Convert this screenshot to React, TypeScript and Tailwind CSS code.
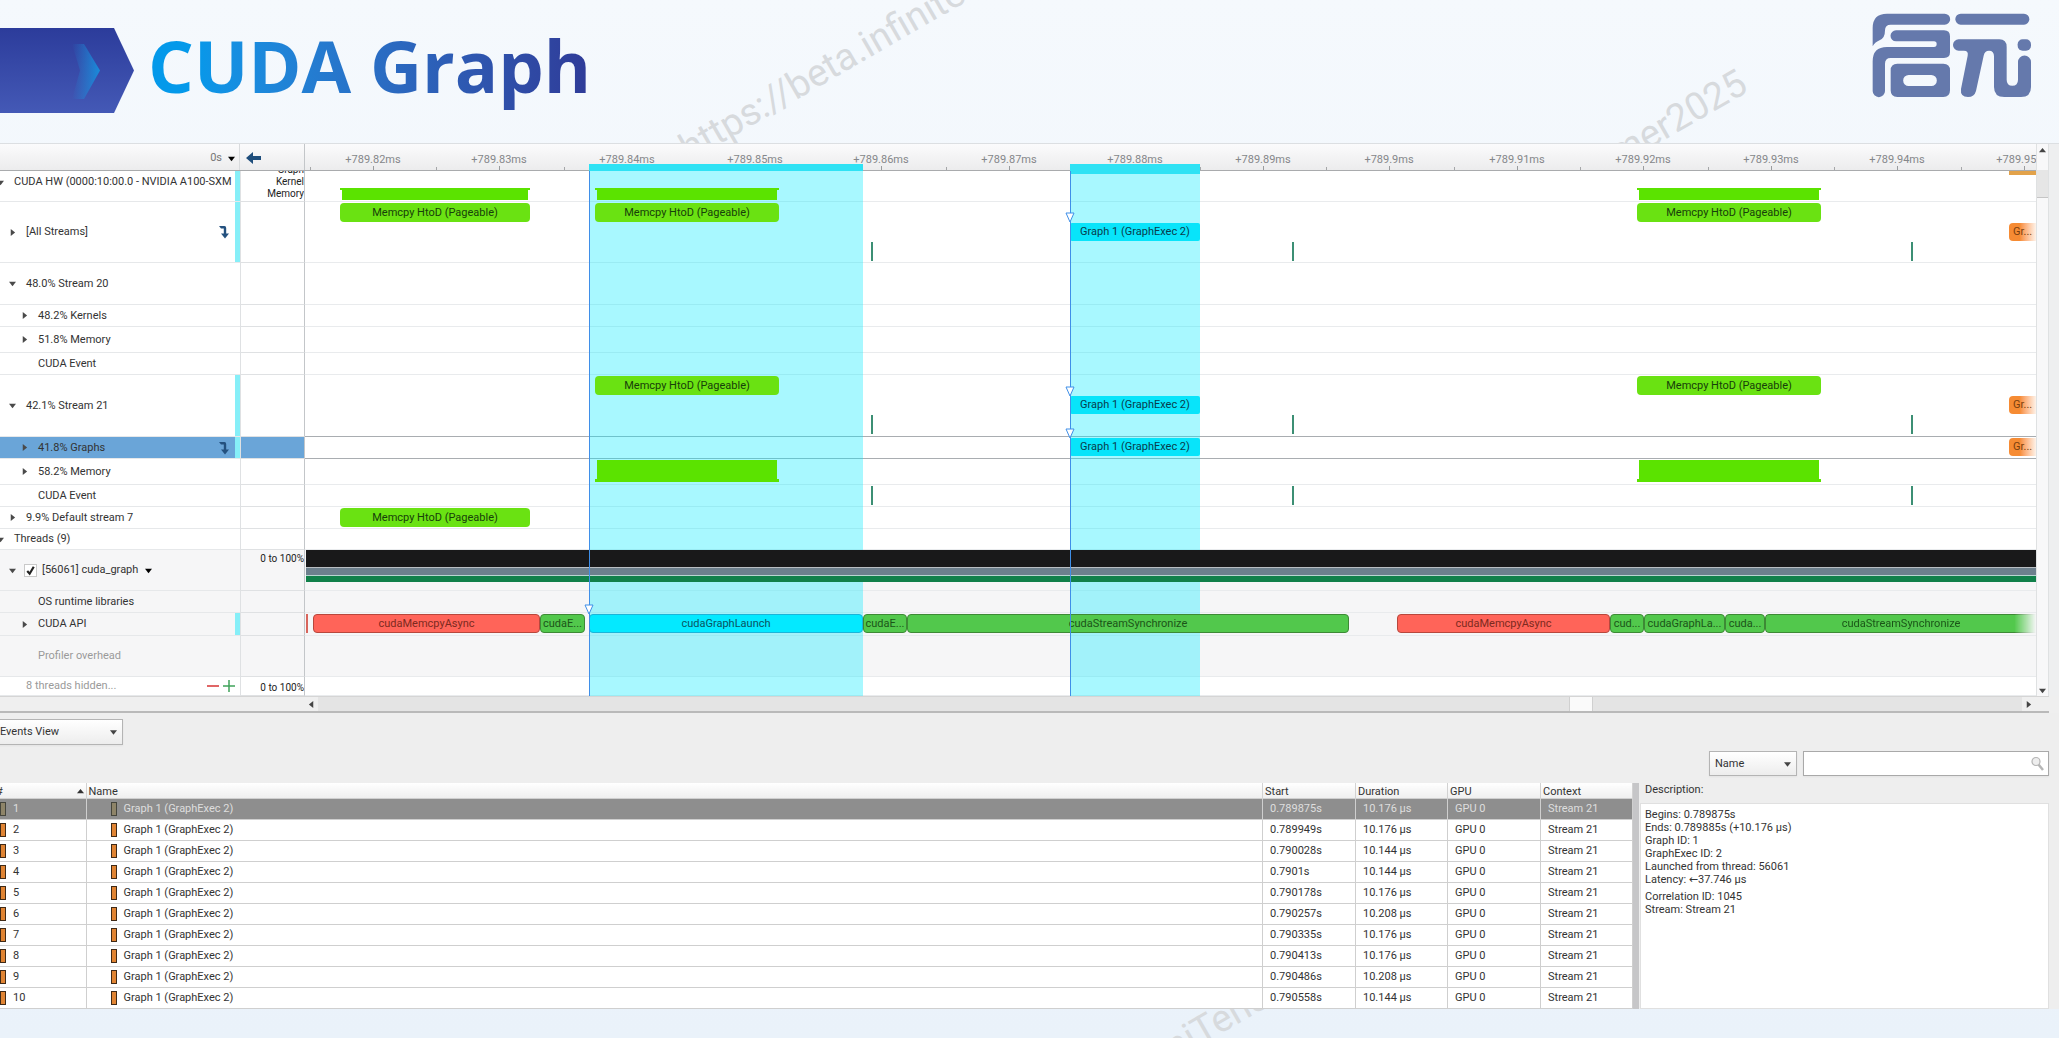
import React from 'react';

const ORIGIN = 305;
const SPAN = 1731;
const at = (x: number) => `${((x - ORIGIN) / SPAN) * 100}%`;
const wide = (w: number) => `${(w / SPAN) * 100}%`;

type Block = {
  kind: 'copy' | 'graph' | 'next' | 'red' | 'green' | 'launch' | 'event' | 'trackTop' | 'trackBottom' | 'sliver' | 'strip' | 'greenFade';
  from: number;
  to: number;
  top: string;
  label?: string;
};

type Row = {
  label: string;
  level: number;
  height: string;
  caret?: 'open' | 'closed';
  tone?: 'gray' | 'selected';
  muted?: boolean;
  raised?: boolean;
  jump?: boolean;
  linked?: boolean;
  check?: boolean;
  plusMinus?: boolean;
  values?: string[];
  valuesTop?: boolean;
  usage?: boolean;
  blocks?: Block[];
};

const MEMCPY = 'Memcpy HtoD (Pageable)';
const GRAPH = 'Graph 1 (GraphExec 2)';

const streamEvents = (top: string): Block[] =>
  [871, 1292, 1911].map((x) => ({ kind: 'event' as const, from: x, to: x + 2, top }));

const rows: Row[] = [
  {
    label: 'CUDA HW (0000:10:00.0 - NVIDIA A100-SXM', level: 0, height: 'h-[31px]', caret: 'open', linked: true, raised: true,
    values: ['Graph', 'Kernel', 'Memory'],
    blocks: [
      { kind: 'trackTop', from: 340, to: 530, top: 'top-[17px]' },
      { kind: 'trackTop', from: 595, to: 779, top: 'top-[17px]' },
      { kind: 'trackTop', from: 1637, to: 1821, top: 'top-[17px]' },
      { kind: 'strip', from: 2009, to: 2036, top: 'top-0' },
    ],
  },
  {
    label: '[All Streams]', level: 1, height: 'h-[61px]', caret: 'closed', linked: true, jump: true,
    blocks: [
      { kind: 'copy', from: 340, to: 530, top: 'top-px', label: MEMCPY },
      { kind: 'copy', from: 595, to: 779, top: 'top-px', label: MEMCPY },
      { kind: 'copy', from: 1637, to: 1821, top: 'top-px', label: MEMCPY },
      { kind: 'graph', from: 1070, to: 1200, top: 'top-[21px]', label: GRAPH },
      { kind: 'next', from: 2009, to: 2036, top: 'top-[21px]', label: 'Gr...' },
      ...streamEvents('top-10'),
    ],
  },
  { label: '48.0% Stream 20', level: 1, height: 'h-[42px]', caret: 'open' },
  { label: '48.2% Kernels', level: 2, height: 'h-[22px]', caret: 'closed' },
  { label: '51.8% Memory', level: 2, height: 'h-[26px]', caret: 'closed' },
  { label: 'CUDA Event', level: 2, height: 'h-[22px]' },
  {
    label: '42.1% Stream 21', level: 1, height: 'h-[62px]', caret: 'open', linked: true,
    blocks: [
      { kind: 'copy', from: 595, to: 779, top: 'top-px', label: MEMCPY },
      { kind: 'copy', from: 1637, to: 1821, top: 'top-px', label: MEMCPY },
      { kind: 'graph', from: 1070, to: 1200, top: 'top-[21px]', label: GRAPH },
      { kind: 'next', from: 2009, to: 2036, top: 'top-[21px]', label: 'Gr...' },
      ...streamEvents('top-10'),
    ],
  },
  {
    label: '41.8% Graphs', level: 2, height: 'h-[22px]', caret: 'closed', tone: 'selected', linked: true, jump: true,
    blocks: [
      { kind: 'graph', from: 1070, to: 1200, top: 'top-px', label: GRAPH },
      { kind: 'next', from: 2009, to: 2036, top: 'top-px', label: 'Gr...' },
    ],
  },
  {
    label: '58.2% Memory', level: 2, height: 'h-[26px]', caret: 'closed',
    blocks: [
      { kind: 'trackBottom', from: 595, to: 779, top: 'top-px' },
      { kind: 'trackBottom', from: 1637, to: 1821, top: 'top-px' },
    ],
  },
  { label: 'CUDA Event', level: 2, height: 'h-[22px]', blocks: streamEvents('top-px') },
  {
    label: '9.9% Default stream 7', level: 1, height: 'h-[22px]', caret: 'closed',
    blocks: [{ kind: 'copy', from: 340, to: 530, top: 'top-px', label: MEMCPY }],
  },
  { label: 'Threads (9)', level: 0, height: 'h-[21px]', caret: 'open' },
  {
    label: '[56061] cuda_graph', level: 1, height: 'h-[41px]', caret: 'open', tone: 'gray', check: true,
    values: ['0 to 100%'], valuesTop: true, usage: true,
  },
  { label: 'OS runtime libraries', level: 2, height: 'h-[22px]', tone: 'gray' },
  {
    label: 'CUDA API', level: 2, height: 'h-[23px]', caret: 'closed', tone: 'gray', linked: true,
    blocks: [
      { kind: 'sliver', from: 306, to: 308, top: 'top-px' },
      { kind: 'red', from: 313, to: 540, top: 'top-px', label: 'cudaMemcpyAsync' },
      { kind: 'green', from: 540, to: 585, top: 'top-px', label: 'cudaE...' },
      { kind: 'launch', from: 589, to: 863, top: 'top-px', label: 'cudaGraphLaunch' },
      { kind: 'green', from: 863, to: 907, top: 'top-px', label: 'cudaE...' },
      { kind: 'green', from: 907, to: 1349, top: 'top-px', label: 'cudaStreamSynchronize' },
      { kind: 'red', from: 1397, to: 1610, top: 'top-px', label: 'cudaMemcpyAsync' },
      { kind: 'green', from: 1610, to: 1644, top: 'top-px', label: 'cud...' },
      { kind: 'green', from: 1644, to: 1725, top: 'top-px', label: 'cudaGraphLa...' },
      { kind: 'green', from: 1725, to: 1765, top: 'top-px', label: 'cuda...' },
      { kind: 'greenFade', from: 1765, to: 2036, top: 'top-px', label: 'cudaStreamSynchronize' },
    ],
  },
  { label: 'Profiler overhead', level: 2, height: 'h-[41px]', tone: 'gray', muted: true },
  { label: '8 threads hidden...', level: 1, height: 'h-[19px]', muted: true, plusMinus: true, values: ['0 to 100%'] },
];

const blockStyle: Record<Block['kind'], string> = {
  copy: 'h-[19px] rounded bg-[#6ae212] text-[#17400a]',
  graph: 'h-[18px] rounded-xs bg-[#08e4fa] text-[#083c4c]',
  next: 'h-[18px] rounded-l bg-linear-to-r from-[#f68b33] from-40% to-[#fdf3ea] text-[#7a3f10] !justify-start pl-1',
  red: 'h-[19px] rounded border border-[#b8473c] bg-[#ff6459] text-[#7c2a20]',
  green: 'h-[19px] rounded border border-[#3d8a35] bg-[#52c84c] text-[#1b5518]',
  greenFade: 'h-[19px] rounded-l border border-r-0 border-[#3d8a35] bg-[#52c84c] text-[#1b5518] mask-r-from-92%',
  launch: 'h-[19px] rounded-sm border border-[#1cb4d8] bg-[#04e9ff] text-[#0a5362]',
  event: 'h-[19px] bg-[#3c8f74]',
  trackTop: '',
  trackBottom: '',
  sliver: 'h-[19px] bg-[#d8655c]',
  strip: 'h-1 bg-[#e2a24a]',
};

function TimelineBlock({ b }: { b: Block }) {
  const pos = { left: at(b.from), width: wide(b.to - b.from) };
  if (b.kind === 'trackTop' || b.kind === 'trackBottom') {
    return (
      <div className={`absolute z-20 flex flex-col ${b.top}`} style={pos}>
        {b.kind === 'trackTop' && <div className="h-0.5 bg-[#5be300]" />}
        <div className={`mx-0.5 bg-[#5be300] ${b.kind === 'trackTop' ? 'h-2.5' : 'h-[19px]'}`} />
        {b.kind === 'trackBottom' && <div className="h-[3px] bg-[#5be300]" />}
      </div>
    );
  }
  return (
    <div className={`absolute z-20 flex items-center justify-center overflow-hidden whitespace-nowrap ${b.top} ${blockStyle[b.kind]}`} style={pos}>
      {b.label}
    </div>
  );
}

function Triangle({ dir, className = '' }: { dir: 'down' | 'up' | 'left' | 'right'; className?: string }) {
  const d = { down: 'M0 2h8L4 7z', up: 'M0 6h8L4 1z', left: 'M6 0v8L1 4z', right: 'M2 0v8l5-4z' }[dir];
  return (
    <svg viewBox="0 0 8 8" className={`size-[7px] shrink-0 fill-current ${className}`} aria-hidden="true">
      <path d={d} />
    </svg>
  );
}

function JumpIcon() {
  return (
    <svg viewBox="0 0 10 14" className="h-3.5 w-2.5 shrink-0 fill-[#24517f]" aria-hidden="true">
      <path d="M0 1h5.5Q7.2 1 7.2 3v5.5H10L6 13.5 2 8.500h2.800V3.600H2z" />
    </svg>
  );
}

const indent = ['pl-[14px]', 'pl-[26px]', 'pl-[38px]'];
const toneBg = { gray: 'bg-[#f6f6f7]', selected: 'bg-[#6aa5d8]', none: 'bg-white' };

function TimelineRow({ r }: { r: Row }) {
  const bg = toneBg[r.tone ?? 'none'];
  const line = r.tone === 'selected' ? 'border-[#a9adb1]' : 'border-[#e9ebed]';
  return (
    <div className={`flex ${r.height}`}>
      <div className={`flex w-60 shrink-0 overflow-hidden border-b border-[#e6e8ea] ${bg} ${indent[r.level]} ${r.muted ? 'text-[#9a9a9a]' : 'text-[#333]'}`}>
        <div className={`flex min-w-0 flex-1 items-center ${r.raised ? 'pb-2' : ''}`}>
          {r.caret && (
            <button type="button" aria-label={`Toggle ${r.label}`} className="mr-[10px] -ml-[17px] text-[#4a4a4a]">
              <Triangle dir={r.caret === 'open' ? 'down' : 'right'} />
            </button>
          )}
          {r.check ? (
            <label className="flex items-center gap-[5px] whitespace-nowrap">
              <span className="relative -ml-0.5 flex size-[13px]">
                <input type="checkbox" defaultChecked className="peer size-[13px] appearance-none border border-[#c9c9c9] bg-white" />
                <svg viewBox="0 0 12 12" className="pointer-events-none absolute inset-0 hidden fill-none stroke-[#222] stroke-2 peer-checked:block" aria-hidden="true">
                  <path d="M3 6.500 5.200 9 9 2.500" />
                </svg>
              </span>
              {r.label}
              <Triangle dir="down" className="ml-0.5 text-black" />
            </label>
          ) : (
            <span className="whitespace-nowrap">{r.label}</span>
          )}
        </div>
        <span className="flex h-full shrink-0 items-center">
          {r.jump && <span className="mr-1.5"><JumpIcon /></span>}
          {r.plusMinus && (
            <span className="mr-[5px] flex items-center gap-1">
              <button type="button" aria-label="Hide thread" className="flex size-3 items-center"><span className="h-0.5 w-full bg-[#e06666]" /></button>
              <button type="button" aria-label="Show thread" className="flex size-3 items-center justify-center">
                <svg viewBox="0 0 12 12" className="size-3 stroke-[#3fa35a] stroke-[1.500]" aria-hidden="true"><path d="M0 6h12M6 0v12" /></svg>
              </button>
            </span>
          )}
          {r.linked && <span className="h-full w-[5px] shrink-0 bg-[#86eff8]" />}
        </span>
      </div>
      <div className={`flex w-[65px] shrink-0 flex-col items-end overflow-hidden border-x border-b border-[#dfe1e3] border-r-[#c3c6c9] text-[10px] leading-3 text-[#222] ${bg} ${r.valuesTop ? 'justify-start pt-[3px]' : 'justify-end pb-px'}`}>
        {r.values?.map((v) => <span key={v} className="whitespace-nowrap">{v}</span>)}
      </div>
      <div className={`relative min-w-0 flex-1 border-b ${line} ${r.tone === 'gray' ? 'bg-[#f6f6f7]' : 'bg-white'}`}>
        {r.tone === 'selected' && <div className="absolute inset-x-0 -top-px h-px bg-[#a9adb1]" />}
        {r.usage && (
          <div className="relative z-20 ml-px flex flex-col">
            <div className="h-[17px] bg-[#19191a]" />
            <div className="h-px bg-[#b9bec2]" />
            <div className="h-[7px] bg-[#6d808d]" />
            <div className="h-px bg-[#b9d5d0]" />
            <div className="h-1.5 bg-[#11804a]" />
          </div>
        )}
        {r.blocks?.map((b, i) => <TimelineBlock key={i} b={b} />)}
      </div>
    </div>
  );
}

const ticks: [string, number][] = [
  ['+789.82ms', 373], ['+789.83ms', 499], ['+789.84ms', 627], ['+789.85ms', 755], ['+789.86ms', 881], ['+789.87ms', 1009],
  ['+789.88ms', 1135], ['+789.89ms', 1263], ['+789.9ms', 1389], ['+789.91ms', 1517], ['+789.92ms', 1643], ['+789.93ms', 1771],
  ['+789.94ms', 1897], ['+789.95ms', 2024],
];

const selections = [
  { from: 589, to: 863, head: 'h-[7px]', flags: ['top-[460px]'] },
  { from: 1070, to: 1200, head: 'h-2.5', flags: ['top-[68px]', 'top-[242px]', 'top-[284px]'] },
];

function Selections() {
  return (
    <div className="pointer-events-none absolute inset-y-0 left-[305px] right-0">
      {selections.map((s) => (
        <React.Fragment key={s.from}>
          <div className="absolute top-[27px] bottom-0 z-10 bg-[#00eaff]/34" style={{ left: at(s.from), width: wide(s.to - s.from) }} />
          <div className={`absolute top-5 z-20 bg-[#2fe2f4] ${s.head}`} style={{ left: at(s.from), width: wide(s.to - s.from) }} />
          <div className="absolute top-[27px] bottom-0 z-30 w-px bg-[#3f8fe8]" style={{ left: at(s.from) }} />
          {s.flags.map((f) => (
            <svg key={f} viewBox="0 0 10 11" className={`absolute z-30 h-[11px] w-2.5 -translate-x-1/2 fill-white stroke-[#3f8fe8] ${f}`} style={{ left: at(s.from) }} aria-hidden="true">
              <path d="M1 1h8L5 10z" />
            </svg>
          ))}
        </React.Fragment>
      ))}
    </div>
  );
}

function Ruler() {
  return (
    <div className="flex h-[27px] border-b border-[#a9abad] bg-linear-to-b from-[#fbfbfc] to-[#ececed]">
      <button type="button" className="flex w-60 shrink-0 items-center justify-end gap-1.5 border-r border-[#d9dbdd] pt-0.5 pr-1 text-[#777]">
        0s <Triangle dir="down" className="text-black" />
      </button>
      <button type="button" aria-label="Back" className="flex w-[65px] shrink-0 items-center border-r border-[#c3c6c9] pt-0.5 pl-1.5">
        <svg viewBox="0 0 16 14" className="h-3.5 w-4 fill-[#1f4e7c]" aria-hidden="true">
          <path d="M7 1v4h8v4H7v4L0 7z" />
        </svg>
      </button>
      <div className="relative min-w-0 flex-1 overflow-hidden text-[#85878a]">
        {ticks.map(([t, x]) => (
          <React.Fragment key={t}>
            <span className="absolute top-2 -translate-x-1/2 whitespace-nowrap leading-4" style={{ left: at(x) }}>{t}</span>
            <span className="absolute bottom-0 h-1 w-px bg-[#9a9c9e]" style={{ left: at(x) }} />
            <span className="absolute bottom-0 h-[3px] w-px bg-[#a5a7a9]" style={{ left: at(x - 63) }} />
          </React.Fragment>
        ))}
      </div>
    </div>
  );
}

const events: [string, string][] = [
  ['0.789875s', '10.176 μs'], ['0.789949s', '10.176 μs'], ['0.790028s', '10.144 μs'], ['0.7901s', '10.144 μs'], ['0.790178s', '10.176 μs'],
  ['0.790257s', '10.208 μs'], ['0.790335s', '10.176 μs'], ['0.790413s', '10.176 μs'], ['0.790486s', '10.208 μs'], ['0.790558s', '10.144 μs'],
];

function Chip({ dim }: { dim: boolean }) {
  return <span className={`block h-3.5 w-1.5 shrink-0 border ${dim ? 'border-[#45453c] bg-[#8e8468]' : 'border-[#3f2a17] bg-[#e08433]'}`} />;
}

function EventsTable() {
  const th = 'border-r border-[#d2d2d2] px-0.5 pt-0.5 pb-0 text-left font-normal leading-[13px]';
  const td = 'border-r border-[#cfcfcf] py-0 pl-[7px]';
  return (
    <table className="w-full table-fixed border-collapse whitespace-nowrap">
      <colgroup>
        <col className="w-[86px]" />
        <col />
        <col className="w-[93px]" />
        <col className="w-[92px]" />
        <col className="w-[93px]" />
        <col className="w-[92px]" />
      </colgroup>
      <thead>
        <tr className="h-[15px] border-b border-[#cfcfcf] bg-linear-to-b from-white to-[#efefef] text-[#333]">
          <th className="overflow-hidden border-r border-[#d2d2d2] px-0 pt-0.5 pb-0 font-normal leading-[13px]">
            <span className="-ml-1 flex items-center justify-between pr-0.5"># <Triangle dir="up" /></span>
          </th>
          <th className={th}>Name</th>
          <th className={th}>Start</th>
          <th className={th}>Duration</th>
          <th className={th}>GPU</th>
          <th className={th}>Context</th>
        </tr>
      </thead>
      <tbody>
        {events.map(([start, dur], i) => (
          <tr key={start} className={`h-[21px] border-b border-[#cfcfcf] ${i === 0 ? 'bg-[#8e8e8e] text-[#dedede]' : 'bg-white text-[#333]'}`}>
            <td className="border-r border-[#cfcfcf] p-0">
              <span className="flex items-center gap-[7px]"><Chip dim={i === 0} />{i + 1}</span>
            </td>
            <td className="border-r border-[#cfcfcf] p-0 pl-6">
              <span className="flex items-center gap-[7px]"><Chip dim={i === 0} />{GRAPH}</span>
            </td>
            <td className={td}>{start}</td>
            <td className={td}>{dur}</td>
            <td className={td}>GPU 0</td>
            <td className={td}>Stream 21</td>
          </tr>
        ))}
      </tbody>
    </table>
  );
}

function Dropdown({ label, value, className }: { label: string; value: string; className: string }) {
  return (
    <div className={`relative ${className}`}>
      <select aria-label={label} className="size-full appearance-none border border-[#b4b4b4] bg-linear-to-b from-white to-[#ededed] pl-[5px] text-[#333] shadow-xs">
        <option>{value}</option>
      </select>
      <Triangle dir="down" className="pointer-events-none absolute right-1.5 top-1/2 -translate-y-1/2 text-[#444]" />
    </div>
  );
}

function Logo() {
  return (
    <svg viewBox="96 40 480 255" className="absolute right-[27px] top-[13px] h-[85px] w-40 fill-[#6579ac]" role="img" aria-label="启元">
      <path d="M98 140V85Q98 42 141 42H314a16.500 16.500 0 0 1 0 33H152Q135 75 135 92 135 115 120 121 105 127 98 140Z" />
      <path d="M168 92H312Q330 92 330 110V158Q330 175 312 175H152Q135 175 135 192V274a18.500 18.500 0 0 1-37 0V185Q98 142 141 142H282Q290 142 290 133 290 125 282 125H168a16.500 16.500 0 0 1 0-33Z" />
      <path fillRule="evenodd" d="M172 192H310q20 0 20 20V272q0 20-20 20H172q-20 0-20-20V212q0-20 20-20ZM206 226a16.500 16.500 0 0 0 0 33H274a16.500 16.500 0 0 0 0-33Z" />
      <rect x="346" y="42" width="222" height="33" rx="16" />
      <path d="M356 119H478Q500 119 500 142V240Q500 258 517 258 534 258 534 240V187a19.500 19.500 0 0 1 39 0V262Q573 292 543 292H493Q462 292 462 262V170Q462 153 447 153 434 153 431 168L408 274Q403 292 384 292 360 292 363 268L383 168Q386 153 372 153H356a17 17 0 0 1 0-34Z" />
      <rect x="533" y="119" width="40" height="34" rx="15" />
    </svg>
  );
}

export default function App() {
  return (
    <main className="flex min-h-screen flex-col overflow-hidden bg-linear-to-b from-[#f5f9fd] to-[#eaf2fa] font-['Roboto','DejaVu_Sans',sans-serif] text-[11px] leading-4">
      <header className="relative h-[143px] overflow-hidden">
        <span className="absolute left-[692px] top-[129px] origin-bottom-left -rotate-30 whitespace-nowrap text-[38px] leading-none text-[#d7dadd]">https://beta.infinitensor</span>
        <span className="absolute right-[306px] top-[58px] origin-bottom-right -rotate-30 whitespace-nowrap text-[38px] leading-none text-[#d7dadd]">summer2025</span>
        <div className="flex items-start pt-7">
          <svg viewBox="0 0 134 86" className="h-[86px] w-[134px]" aria-hidden="true">
            <defs>
              <linearGradient id="tab" x1="0" y1="0" x2="0" y2="1">
                <stop offset="0" stopColor="#2c3c9b" />
                <stop offset="1" stopColor="#4459b6" />
              </linearGradient>
              <linearGradient id="chev" x1="0" y1="0" x2="1" y2="0">
                <stop offset="0" stopColor="#1f8fdc" stopOpacity="0" />
                <stop offset="1" stopColor="#1593e0" stopOpacity="0.9" />
              </linearGradient>
            </defs>
            <path d="M0 0H114L134 42.500 114 85H0Z" fill="url(#tab)" />
            <path d="M72 16 84 16 100 42.500 84 71 72 71 80 42.500Z" fill="url(#chev)" />
          </svg>
          <h1 className="ml-3.5 -mt-2 bg-linear-to-r from-[#0499ea] from-10% to-[#2f3b98] bg-clip-text font-['Open_Sans',sans-serif] text-[72px] font-bold leading-[90px] text-transparent">CUDA Graph</h1>
        </div>
        <Logo />
      </header>

      <section className="flex border-t border-[#dcdfe2] bg-[#eeeff0] pr-2.5">
        <div className="relative min-w-0 flex-1">
          <Ruler />
          {rows.map((r, i) => <TimelineRow key={i} r={r} />)}
          <Selections />
        </div>
        <div className="flex w-[13px] shrink-0 flex-col items-center border-x border-[#dfe1e2] bg-[#f8f8f9] text-[#444]">
          <button type="button" aria-label="Scroll up" className="flex h-[26px] items-start pt-[3px]"><Triangle dir="up" /></button>
          <div className="h-7 w-full border-b border-[#c5c5c5] bg-[#e6e6e6]" />
          <button type="button" aria-label="Scroll down" className="mt-auto mb-0.5"><Triangle dir="down" /></button>
        </div>
      </section>
      <div className="bg-[#efefef] pr-2.5">
        <div className="flex h-[17px] items-center border-t border-b-2 border-[#b9b9b9] border-t-[#d5d5d5] pl-[308px] pr-[17px] text-[#444]">
          <button type="button" aria-label="Scroll left" className="flex w-2.5"><Triangle dir="left" /></button>
          <div className="flex h-full flex-1 bg-[#e4e4e4]">
            <div className="h-full" style={{ width: `${(1251 / 1704) * 100}%` }} />
            <div className="h-full w-6 border-x border-[#d0d0d0] bg-[#fafafa]" />
          </div>
          <button type="button" aria-label="Scroll right" className="flex w-2.5 justify-end"><Triangle dir="right" /></button>
        </div>
      </div>

      <section className="flex flex-col bg-[#eeeeee] pr-2.5 pt-1.5">
        <Dropdown label="View" value="Events View" className="-ml-1.5 h-[26px] w-[129px]" />
        <div className="mt-1.5 flex justify-end gap-1.5">
          <Dropdown label="Search column" value="Name" className="h-[25px] w-[88px]" />
          <div className="relative h-[25px] w-[246px]">
            <input type="text" aria-label="Search" className="size-full border border-[#a9a9a9] bg-white px-1 shadow-xs" />
            <svg viewBox="0 0 14 16" className="pointer-events-none absolute right-1 top-[5px] h-4 w-3.5 fill-[#eeeeee] stroke-[#b5b5b5]" aria-hidden="true">
              <path d="M7.500 8.500 12 14" strokeWidth="2.500" />
              <circle cx="5" cy="5.500" r="4" strokeWidth="1.200" />
            </svg>
          </div>
        </div>
        <div className="mt-[7px] flex">
          <div className="min-w-0 flex-1"><EventsTable /></div>
          <div className="w-1.5 shrink-0 bg-[#c6c6c8]" />
          <aside className="flex w-[410px] shrink-0 flex-col text-[#333]">
            <h2 className="pl-1.5 leading-[14px]">Description:</h2>
            <div className="ml-px mt-1.5 flex-1 border border-[#e0e0e0] bg-white px-1 pt-1 leading-[13px]">
              <p>Begins: 0.789875s</p>
              <p>Ends: 0.789885s (+10.176 μs)</p>
              <p>Graph ID: 1</p>
              <p>GraphExec ID: 2</p>
              <p>Launched from thread: 56061</p>
              <p>Latency: ←37.746 μs</p>
              <p className="mt-1">Correlation ID: 1045</p>
              <p>Stream: Stream 21</p>
            </div>
          </aside>
        </div>
      </section>
      <footer className="relative min-h-7 flex-1 overflow-hidden">
        <span className="absolute left-[1132px] top-[45px] origin-bottom-left -rotate-30 whitespace-nowrap text-[38px] leading-none text-[#d7dadd]">InfiniTensor</span>
      </footer>
    </main>
  );
}
